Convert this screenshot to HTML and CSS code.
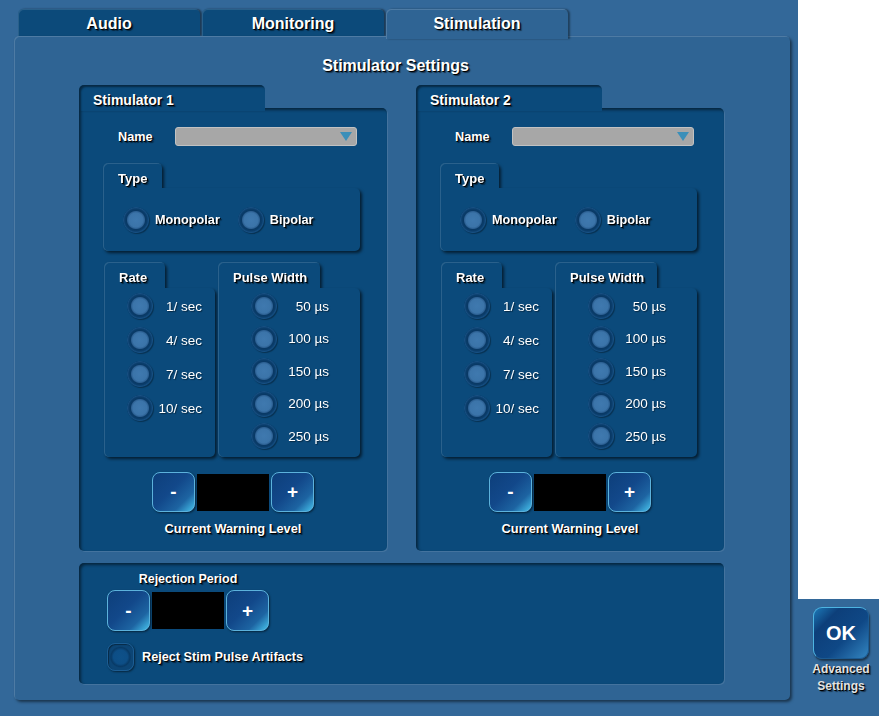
FILE: index.html
```html
<!DOCTYPE html>
<html>
<head>
<meta charset="utf-8">
<title>Stimulator Settings</title>
<link rel="stylesheet" href="styles.css">
</head>
<body>
<div class="screen">
  <div class="main">
    <div class="tabs">
      <div class="tab">Audio</div>
      <div class="tab">Monitoring</div>
      <div class="tab active">Stimulation</div>
    </div>
    <div class="panel">
      <div class="title">Stimulator Settings</div>
      <div class="stims">
        <section class="stim">
          <div class="stim-tab">Stimulator 1</div>
          <div class="stim-body">
            <div class="name-row">
              <span class="name-lbl">Name</span>
              <div class="select"><svg class="caret" width="12" height="9" viewBox="0 0 12 9"><polygon points="0,0 12,0 6,9" fill="#3b8fb9"/></svg></div>
            </div>
            <div class="group type">
              <div class="group-tab">Type</div>
              <div class="group-body type-body">
                <span class="radio"></span><span class="opt">Monopolar</span>
                <span class="radio second"></span><span class="opt">Bipolar</span>
              </div>
            </div>
            <div class="pair">
              <div class="group rate">
                <div class="group-tab">Rate</div>
                <div class="group-body rate-body">
                  <div class="row"><span class="radio"></span><span class="val">1/ sec</span></div>
                  <div class="row"><span class="radio"></span><span class="val">4/ sec</span></div>
                  <div class="row"><span class="radio"></span><span class="val">7/ sec</span></div>
                  <div class="row"><span class="radio"></span><span class="val">10/ sec</span></div>
                </div>
              </div>
              <div class="group pulse">
                <div class="group-tab">Pulse Width</div>
                <div class="group-body pulse-body">
                  <div class="row"><span class="radio"></span><span class="val">50 µs</span></div>
                  <div class="row"><span class="radio"></span><span class="val">100 µs</span></div>
                  <div class="row"><span class="radio"></span><span class="val">150 µs</span></div>
                  <div class="row"><span class="radio"></span><span class="val">200 µs</span></div>
                  <div class="row"><span class="radio"></span><span class="val">250 µs</span></div>
                </div>
              </div>
            </div>
            <div class="stepper">
              <button class="btn">-</button><div class="display"></div><button class="btn">+</button>
            </div>
            <div class="cap">Current Warning Level</div>
          </div>
        </section>
        <section class="stim">
          <div class="stim-tab">Stimulator 2</div>
          <div class="stim-body">
            <div class="name-row">
              <span class="name-lbl">Name</span>
              <div class="select"><svg class="caret" width="12" height="9" viewBox="0 0 12 9"><polygon points="0,0 12,0 6,9" fill="#3b8fb9"/></svg></div>
            </div>
            <div class="group type">
              <div class="group-tab">Type</div>
              <div class="group-body type-body">
                <span class="radio"></span><span class="opt">Monopolar</span>
                <span class="radio second"></span><span class="opt">Bipolar</span>
              </div>
            </div>
            <div class="pair">
              <div class="group rate">
                <div class="group-tab">Rate</div>
                <div class="group-body rate-body">
                  <div class="row"><span class="radio"></span><span class="val">1/ sec</span></div>
                  <div class="row"><span class="radio"></span><span class="val">4/ sec</span></div>
                  <div class="row"><span class="radio"></span><span class="val">7/ sec</span></div>
                  <div class="row"><span class="radio"></span><span class="val">10/ sec</span></div>
                </div>
              </div>
              <div class="group pulse">
                <div class="group-tab">Pulse Width</div>
                <div class="group-body pulse-body">
                  <div class="row"><span class="radio"></span><span class="val">50 µs</span></div>
                  <div class="row"><span class="radio"></span><span class="val">100 µs</span></div>
                  <div class="row"><span class="radio"></span><span class="val">150 µs</span></div>
                  <div class="row"><span class="radio"></span><span class="val">200 µs</span></div>
                  <div class="row"><span class="radio"></span><span class="val">250 µs</span></div>
                </div>
              </div>
            </div>
            <div class="stepper">
              <button class="btn">-</button><div class="display"></div><button class="btn">+</button>
            </div>
            <div class="cap">Current Warning Level</div>
          </div>
        </section>
      </div>
      <div class="reject">
        <div class="rej-col">
          <div class="rej-cap">Rejection Period</div>
          <div class="stepper rej-stepper">
            <button class="btn">-</button><div class="display"></div><button class="btn">+</button>
          </div>
        </div>
        <div class="check-row">
          <span class="check"></span><span class="check-lbl">Reject Stim Pulse Artifacts</span>
        </div>
      </div>
    </div>
  </div>
  <div class="side">
    <div class="blank"></div>
    <div class="ok-area">
      <button class="ok">OK</button>
      <div class="adv">Advanced<br>Settings</div>
    </div>
  </div>
</div>
</body>
</html>
```
FILE: styles.css
```css
* { box-sizing: border-box; margin: 0; padding: 0; }
html, body { width: 879px; height: 716px; overflow: hidden; }
body {
  background: #336899;
  font-family: "Liberation Sans", Arial, Helvetica, sans-serif;
  font-weight: bold;
  color: #fff;
  text-shadow: 1px 1px 0 #000, 2px 2px 1px rgba(0,0,0,.5);
}
.screen { display: flex; height: 716px; }
.main { width: 798px; padding: 9px 8px 0 14px; display: flex; flex-direction: column; }

.tabs { display: flex; gap: 2px; padding-left: 4px; height: 27px; }
.tab {
  width: 182px; height: 27px;
  border-radius: 5px 5px 0 0;
  background: #0c4a7a;
  font-size: 16px; line-height: 24px; padding-top: 3px;
  text-align: center;
  box-shadow: 2px 0 2px rgba(0,0,0,.45), inset 1px 1px 0 rgba(255,255,255,.12);
}
.tab.active {
  background: #2f6494;
  position: relative; z-index: 1;
  height: 30px; margin-bottom: -3px;
  box-shadow: 2px 0 2px rgba(0,0,0,.4), inset 1px 1px 0 rgba(255,255,255,.15);
}

.panel {
  height: 664px;
  background: #2f6494;
  border-radius: 5px;
  box-shadow: 2px 2px 3px rgba(0,0,0,.5), inset 1px 1px 0 rgba(255,255,255,.15);
  padding: 20px 0 0 65px;
}
.title {
  width: 645px; padding-right: 12px;
  text-align: center;
  font-size: 16px; line-height: 20px;
  margin-bottom: 9px;
}
.stims { display: flex; gap: 29px; }
.stim { width: 308px; display: flex; flex-direction: column; }
.stim-tab {
  width: 186px; height: 26px; margin-bottom: -3px;
  position: relative; z-index: 1;
  background: #0b4a7b;
  border-radius: 5px 5px 0 0;
  padding: 7px 0 0 14px;
  font-size: 14px; line-height: 17px;
  box-shadow: inset 2px 2px 2px rgba(0,0,0,.45);
}
.stim-body {
  height: 443px;
  background: #0b4a7b;
  border-radius: 0 5px 5px 5px;
  box-shadow: inset 2px 2px 3px rgba(0,0,0,.5), 1px 1px 0 rgba(255,255,255,.1);
  padding-top: 19px;
  display: flex; flex-direction: column;
}

.name-row { display: flex; align-items: center; height: 19px; padding-left: 39px; }
.name-lbl { width: 57px; font-size: 12.7px; }
.select {
  width: 182px; height: 19px;
  background: #a7a7a7;
  border: 1px solid #c2c2c2;
  border-radius: 3px;
  display: flex; align-items: center; justify-content: flex-end;
  padding-right: 4px;
}

.group { display: flex; flex-direction: column; filter: drop-shadow(2px 2px 1.5px rgba(0,0,0,.6)); }
.group-tab {
  align-self: flex-start;
  background: #0b4a7b;
  border-radius: 5px 5px 0 0;
  height: 26px;
  padding: 7px 0 0 15px;
  font-size: 13px; line-height: 17px;
  box-shadow: inset 1px 1px 0 rgba(255,255,255,.13);
}
.group-body {
  background: #0b4a7b;
  border-radius: 0 5px 5px 5px;
  box-shadow: inset 1px 0 0 rgba(255,255,255,.13);
}
.type { margin: 17px 0 0 24px; }
.type .group-tab { width: 59px; height: 25px; }
.type-body { width: 257px; height: 63px; display: flex; align-items: center; padding-left: 20px; }
.opt { font-size: 12.7px; margin-left: 6px; }
.radio.second { margin-left: 18px; }

.radio {
  flex: none;
  width: 26px; height: 26px;
  border-radius: 50%;
  background: radial-gradient(circle at 50% 50%, #3f79af 0, #3b74a9 7px, #2d6194 8.5px, #093965 9.5px, #0a3d6b 11px, #174f82 12.5px, #0a3f6e 13px);
  box-shadow: 1px 1px 1px rgba(0,0,0,.35);
}

.pair { display: flex; gap: 3px; margin: 11px 0 0 25px; }
.rate .group-tab { width: 61px; }
.rate-body { width: 111px; height: 169px; padding: 5px 13px 0 23px; display: flex; flex-direction: column; gap: 8px; }
.pulse .group-tab { width: 102px; }
.pulse-body { width: 142px; height: 169px; padding: 5px 31px 0 33px; display: flex; flex-direction: column; gap: 6.5px; }
.row { display: flex; align-items: center; height: 26px; }
.val {
  margin-left: auto;
  font-size: 13.5px; font-weight: normal;
  color: #fff;
  text-shadow: 1px 1px 1px rgba(0,0,0,.45);
}

.stepper { display: flex; align-items: center; gap: 2px; justify-content: center; margin-top: 15px; }
.btn {
  width: 43px; height: 40px;
  border: 1px solid #5cb2dc;
  border-radius: 8px;
  background: linear-gradient(135deg, #0d3f7b 0%, #12488a 45%, #1d64a2 75%, #46c2ec 100%);
  color: #fff;
  font-family: "Liberation Sans", Arial, sans-serif;
  font-weight: bold; font-size: 19px;
  text-shadow: none;
  box-shadow: 1px 1px 2px rgba(0,0,0,.5);
}
.display { width: 72px; height: 37px; background: #000; }
.cap { text-align: center; font-size: 12.8px; line-height: 17px; margin-top: 8px; }

.reject {
  margin-top: 12px;
  width: 645px; height: 121px;
  background: #0b4a7b;
  border-radius: 5px;
  box-shadow: inset 2px 2px 3px rgba(0,0,0,.5), 1px 1px 0 rgba(255,255,255,.1);
  padding: 8px 0 0 28px;
}
.rej-col { width: 162px; display: flex; flex-direction: column; }
.rej-cap { text-align: center; font-size: 12.5px; line-height: 17px; }
.rej-stepper { margin-top: 2px; }
.rej-stepper .btn { height: 41px; }
.check-row { display: flex; align-items: center; margin-top: 12px; height: 28px; }
.check {
  width: 27px; height: 28px;
  border-radius: 8px;
  background: radial-gradient(circle at 50% 50%, #0e5189 0, #0d4e86 7px, #083a66 9.5px, #0c4575 11px);
  border: 1px solid #1c5d93;
  box-shadow: 1px 1px 2px rgba(0,0,0,.5), inset 1px 1px 1px rgba(0,0,0,.4);
}
.check-lbl { margin-left: 8px; font-size: 12.7px; }

.side { width: 81px; display: flex; flex-direction: column; }
.blank { height: 599px; background: #fff; }
.ok-area { display: flex; flex-direction: column; align-items: center; padding: 8px 0 0 5px; }
.ok {
  width: 56px; height: 52px;
  border-radius: 9px;
  border: 1px solid #4db4e2;
  border-right-color: #1b5a92; border-bottom-color: #1b5a92;
  background: linear-gradient(135deg, #1d7ab8 0%, #0d3f7a 25%, #0f4886 60%, #3385c0 100%);
  color: #fff;
  font-family: "Liberation Sans", Arial, sans-serif;
  font-weight: bold; font-size: 20px;
  text-shadow: none;
  box-shadow: 1px 2px 2px rgba(0,0,0,.5);
}
.adv {
  margin-top: 2px;
  text-align: center;
  font-size: 12px; line-height: 17px;
  color: #e2e2e2;
  font-weight: bold;
}
```
